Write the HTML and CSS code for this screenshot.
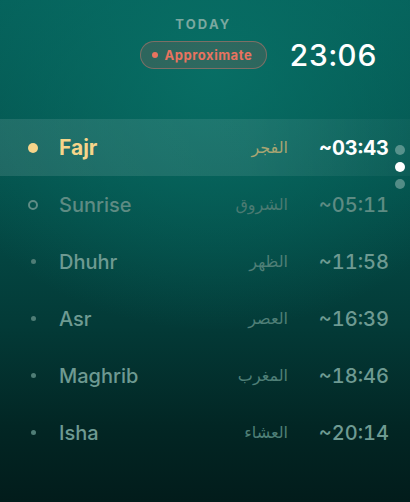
FILE: index.html
```html
<!DOCTYPE html>
<html>
<head>
<meta charset="utf-8">
<link rel="stylesheet" href="styles.css">
</head>
<body>
<div class="screen">
  <header class="header">
    <div class="status">
      <div class="today">TODAY</div>
      <div class="badge"><span class="badge-dot"></span>Approximate</div>
    </div>
    <div class="clock">23:06</div>
  </header>
  <div class="list-wrap">
    <ul class="list">
      <li class="row active">
        <span class="mark"><span class="dot big"></span></span>
        <span class="name">Fajr</span>
        <span class="ar">الفجر</span>
        <span class="time">~03:43</span>
      </li>
      <li class="row sunrise">
        <span class="mark"><span class="dot ring"></span></span>
        <span class="name">Sunrise</span>
        <span class="ar">الشروق</span>
        <span class="time">~05:11</span>
      </li>
      <li class="row">
        <span class="mark"><span class="dot small"></span></span>
        <span class="name">Dhuhr</span>
        <span class="ar">الظهر</span>
        <span class="time">~11:58</span>
      </li>
      <li class="row">
        <span class="mark"><span class="dot small"></span></span>
        <span class="name">Asr</span>
        <span class="ar">العصر</span>
        <span class="time">~16:39</span>
      </li>
      <li class="row">
        <span class="mark"><span class="dot small"></span></span>
        <span class="name">Maghrib</span>
        <span class="ar">المغرب</span>
        <span class="time">~18:46</span>
      </li>
      <li class="row">
        <span class="mark"><span class="dot small"></span></span>
        <span class="name">Isha</span>
        <span class="ar">العشاء</span>
        <span class="time">~20:14</span>
      </li>
    </ul>
    <div class="pager">
      <span class="pdot"></span>
      <span class="pdot on"></span>
      <span class="pdot"></span>
    </div>
  </div>
</div>
</body>
</html>
```
FILE: styles.css
```css
* { box-sizing: border-box; }
html, body { margin: 0; padding: 0; }
body {
  width: 410px;
  height: 502px;
  overflow: hidden;
  font-family: Inter, "Noto Sans", "DejaVu Sans", sans-serif;
}
.screen {
  width: 410px;
  height: 502px;
  background:
    radial-gradient(ellipse 300px 260px at 52% 14%, rgba(8,112,102,0.9), rgba(8,112,102,0) 100%),
    linear-gradient(180deg, #05605a 0%, #04514c 35%, #033a37 65%, #022624 85%, #021c1b 100%);
  position: relative;
}
.header {
  display: flex;
  justify-content: flex-end;
  align-items: flex-end;
  gap: 22px;
  padding: 16px 33px 0 0;
}
.status {
  display: flex;
  flex-direction: column;
  align-items: center;
  gap: 9px;
}
.today {
  font-size: 13px;
  font-weight: 700;
  letter-spacing: 2.2px;
  color: #7ba8a0;
  line-height: 16px;
}
.badge {
  display: flex;
  align-items: center;
  gap: 7px;
  height: 28px;
  padding: 0 14px 0 11px;
  border: 1.5px solid rgba(220,120,110,0.45);
  border-radius: 14px;
  background: rgba(180,90,80,0.22);
  color: #e9735f;
  font-size: 13px;
  font-weight: 700;
  letter-spacing: 0.55px;
}
.badge-dot {
  width: 6px;
  height: 6px;
  border-radius: 50%;
  background: #e9735f;
}
.clock {
  font-size: 30px;
  font-weight: 500;
  color: #ffffff;
  line-height: 28px;
  letter-spacing: 0.4px;
  font-variant-numeric: tabular-nums;
}
.list-wrap {
  position: relative;
  margin-top: 50px;
}
.list {
  list-style: none;
  margin: 0;
  padding: 0;
}
.row {
  display: flex;
  align-items: center;
  height: 57px;
  padding: 0 21px 0 25px;
  color: #6b978f;
}
.row.active {
  background: linear-gradient(90deg, rgba(255,255,255,0.11) 0%, rgba(255,255,255,0.09) 60%, rgba(255,255,255,0.03) 100%);
}
.mark {
  width: 16px;
  display: flex;
  justify-content: center;
  margin-right: 18px;
}
.dot { border-radius: 50%; display: block; }
.dot.big { width: 10px; height: 10px; background: #f6d58a; }
.dot.ring { width: 10px; height: 10px; border: 2px solid #5f8c85; }
.dot.small { width: 5px; height: 5px; background: #4f7d76; }
.name {
  flex: 1;
  font-size: 20px;
  font-weight: 500;
  color: #6e9a92;
}
.ar {
  font-family: "DejaVu Sans", "Noto Sans", sans-serif;
  font-size: 16px;
  color: #4f7f77;
  margin-right: 27px;
  direction: rtl;
}
.time {
  font-size: 20px;
  font-weight: 500;
  color: #6e9a92;
  width: 74px;
  text-align: right;
  font-variant-numeric: tabular-nums;
}
.row.active .name { color: #f6d58a; font-weight: 700; font-size: 21px; }
.row.active .ar { color: #a9a572; }
.row.active .time { color: #ffffff; font-weight: 700; }
.row.sunrise .name, .row.sunrise .time { color: #5e8b83; }
.row.sunrise .ar { color: #4a7a72; }
.pager {
  position: absolute;
  right: 5px;
  top: 26px;
  display: flex;
  flex-direction: column;
  gap: 7px;
}
.pdot {
  width: 10px;
  height: 10px;
  border-radius: 50%;
  background: rgba(200,220,216,0.4);
}
.pdot.on { background: #ffffff; }
```
